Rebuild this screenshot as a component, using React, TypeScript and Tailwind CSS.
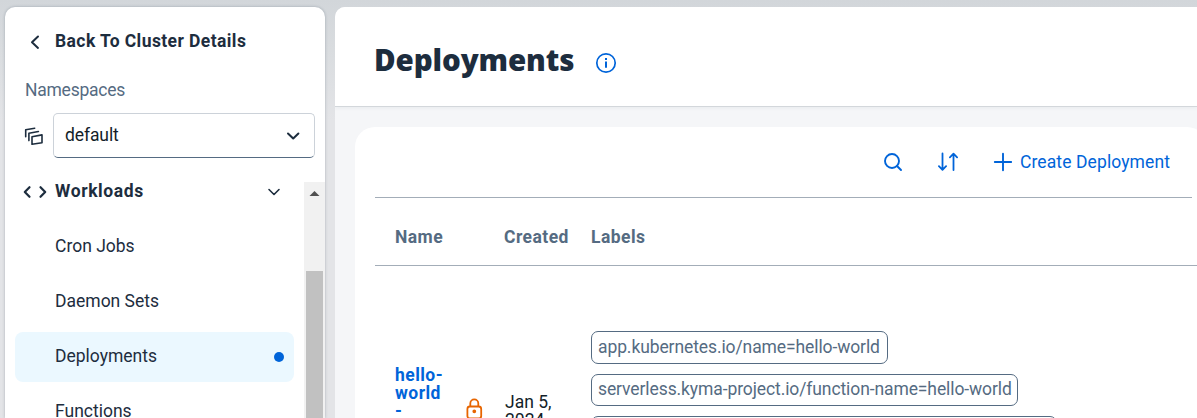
import type { ReactNode } from "react";

function NavItem({ label, active = false }: { label: string; active?: boolean }) {
  return (
    <li
      className={
        active
          ? "flex h-[50px] shrink-0 items-center justify-between rounded-lg bg-[#ebf8ff] pl-10 pr-2.5"
          : "flex h-[50px] shrink-0 items-center pl-10"
      }
    >
      <span className="-mt-[2px]">{label}</span>
      {active && <span className="size-2.5 rounded-full bg-[#0064d9]" />}
    </li>
  );
}

function Token({ children, size }: { children?: ReactNode; size: string }) {
  return (
    <div
      className={`flex shrink-0 items-center whitespace-nowrap rounded-[7px] border border-[#556b82] px-1.5 tracking-[-0.1px] text-[#556b82] ${size}`}
    >
      <span className="-mt-[2px]">{children}</span>
    </div>
  );
}

function Sidebar() {
  return (
    <aside className="flex w-[320px] shrink-0 flex-col rounded-t-[10px] bg-white shadow-[0_0_3px_rgba(34,53,72,0.3)]">
      <div className="flex h-[68px] shrink-0 items-center pl-[24px] font-bold">
        <svg width="11" height="16" viewBox="0 0 11 16" className="mt-[2px] shrink-0" fill="none" stroke="#1d2d3e" strokeWidth="2" strokeLinecap="round" strokeLinejoin="round">
          <path d="M9 2.500 3 8.200l6 5.700" />
        </svg>
        <span className="ml-[15px] tracking-[0.41px]">Back To Cluster Details</span>
      </div>
      <div className="h-[38px] shrink-0 pl-5 pt-[4px] tracking-[-0.25px] text-[#556b82]">Namespaces</div>
      <div className="flex h-[45px] shrink-0 items-center pl-[19px]">
        <svg width="20" height="20" viewBox="0 0 20 20" className="mr-[9px] shrink-0" fill="none" stroke="#1d2d3e" strokeWidth="1.600" strokeLinejoin="round" strokeLinecap="round">
          <path d="m8 10.700 10-1.800v7.800L8 18.300z" />
          <path d="M4.900 14.600V7.300l9.500-1.800M1.700 10.700V3.800l9-1.600" />
        </svg>
        <div className="flex h-[45px] w-[262px] items-center justify-between rounded-[5px] border border-[#ccd2d9] border-b-[#556b82] pl-[11px] pr-[13px]">
          <span className="-mt-[2px] tracking-[-0.1px] text-[#131e29]">default</span>
          <svg width="16" height="12" viewBox="0 0 16 12" className="mt-px" fill="none" stroke="#1d2d3e" strokeWidth="2" strokeLinecap="round" strokeLinejoin="round">
            <path d="m3 3.500 5.200 5 5.200-5" />
          </svg>
        </div>
      </div>
      <div className="mt-[24px] flex min-h-0 flex-1">
        <nav className="flex w-[299px] shrink-0 flex-col overflow-hidden">
          <div className="flex h-[18px] shrink-0 items-center pl-[18px] font-bold">
            <svg width="24" height="16" viewBox="0 0 24 16" className="mt-[2px]" fill="none" stroke="#1d2d3e" strokeWidth="2.200" strokeLinecap="round" strokeLinejoin="round">
              <path d="M6.500 3.200 1.800 8l4.700 4.800M17.500 3.200 22.200 8l-4.700 4.800" />
            </svg>
            <span className="ml-2 flex-1 tracking-[0.6px]">Workloads</span>
            <svg width="16" height="12" viewBox="0 0 16 12" className="mr-[22px] mt-px" fill="none" stroke="#1d2d3e" strokeWidth="1.600" strokeLinecap="round" strokeLinejoin="round">
              <path d="m3 3.500 5 5 5-5" />
            </svg>
          </div>
          <ul className="mt-[22px] flex w-[289px] flex-col gap-[5px] pl-2.5">
            <NavItem label="Cron Jobs" />
            <NavItem label="Daemon Sets" />
            <NavItem label="Deployments" active />
            <NavItem label="Functions" />
          </ul>
        </nav>
        <div className="flex w-[21px] flex-col items-center bg-[#f1f1f1]">
          <svg width="21" height="23" viewBox="0 0 21 23" className="shrink-0">
            <path d="M5.500 14h10l-5-5z" fill="#505050" />
          </svg>
          <div className="mt-[66px] w-[17px] flex-1 bg-[#c1c1c1]" />
        </div>
      </div>
    </aside>
  );
}

function Toolbar() {
  return (
    <div className="ml-5 mr-[15px] flex h-[71px] shrink-0 items-center justify-end border-b border-[#a3adb8] pr-[22px] text-[#0064d9]">
      <svg width="20" height="20" viewBox="0 0 20 20" fill="none" stroke="currentColor" strokeWidth="1.900" strokeLinecap="round">
        <circle cx="9" cy="9" r="7" />
        <path d="m14 14 4 4" />
      </svg>
      <svg width="22" height="20" viewBox="0 0 22 20" className="ml-[34px]" fill="none" stroke="currentColor" strokeWidth="1.800" strokeLinecap="round" strokeLinejoin="round">
        <path d="M5.500 1.500v16.200M1.900 14.200l3.600 3.600 3.600-3.600M16.500 18V1.700M12.900 5.300l3.600-3.600 3.600 3.600" />
      </svg>
      <svg width="20" height="20" viewBox="0 0 20 20" className="ml-[34px]" fill="none" stroke="currentColor" strokeWidth="1.900" strokeLinecap="round">
        <path d="M10 1.800v16.400M1.800 10h16.400" />
      </svg>
      <span className="-mt-px ml-[7px] tracking-[0.1px]">Create Deployment</span>
    </div>
  );
}

function DeploymentsTable() {
  return (
    <>
      <div className="ml-5 flex h-[68px] shrink-0 items-center border-b border-[#a3adb8] pl-5 pt-[10px] font-bold tracking-[0.45px] text-[#556b82]">
        <span className="w-[109px]">Name</span>
        <span className="w-[87px]">Created</span>
        <span>Labels</span>
      </div>
      <div className="ml-10 flex shrink-0 leading-[18px]">
        <div className="w-[71px] pt-[100px] font-bold tracking-[0.45px] text-[#0064d9]">
          <div className="w-[52px]">hello-<br />world<br />-</div>
        </div>
        <svg width="18" height="24" viewBox="0 0 18 24" className="mt-[131px]" fill="none" stroke="#e76500" strokeWidth="1.800">
          <rect x="1.400" y="9.500" width="13.800" height="12" rx="2.500" />
          <path d="M4.300 9.500V6.400a4 4 0 0 1 8 0v3.100" />
          <circle cx="8.300" cy="14.300" r="1" fill="#e76500" />
        </svg>
        <div className="w-[107px] pl-[21px] pt-[127px] text-[#131e29]">Jan 5,<br />2024</div>
        <div className="flex flex-col pt-[65px]">
          <Token size="h-[33px] w-[297px]">app.kubernetes.io/name=hello-world</Token>
          <Token size="mt-[10px] h-[32px] w-[427px]">serverless.kyma-project.io/function-name=hello-world</Token>
          <Token size="mt-[10px] h-[33px] w-[466px]" />
        </div>
      </div>
    </>
  );
}

export default function App() {
  return (
    <div className="flex h-[418px] w-[1197px] overflow-hidden bg-[linear-gradient(#d2d6da_0px,#d9dcdf_50px,#e3e4e7_120px)] pl-[5px] pt-[7px] font-['Roboto','Liberation_Sans',sans-serif] text-[17.5px] leading-[22px] text-[#1d2d3e]">
      <Sidebar />
      <main className="ml-2.5 flex min-w-0 flex-1 flex-col overflow-hidden rounded-tl-[10px] bg-[#f5f6f8]">
        <header className="relative flex h-[100px] shrink-0 items-center border-b border-[#d3d7db] bg-white pl-[39px] shadow-[0_2px_3px_rgba(34,53,72,0.04)]">
          <h1 className="mt-[7px] w-[200px] whitespace-nowrap font-['Open_Sans','Noto_Sans',sans-serif] text-[29.5px] font-extrabold leading-[36px] tracking-[-0.1px]">Deployments</h1>
          <svg width="22" height="22" viewBox="0 0 22 22" className="ml-[21px] mt-[13px]" fill="none" stroke="#0064d9" strokeWidth="1.700">
            <circle cx="11" cy="11" r="9.200" />
            <path d="M11 9.500v6.200M11 6v2" strokeWidth="2" />
          </svg>
        </header>
        <section className="ml-5 mt-5 flex w-[852px] flex-1 flex-col overflow-hidden rounded-t-[20px] bg-white">
          <Toolbar />
          <DeploymentsTable />
        </section>
      </main>
    </div>
  );
}
